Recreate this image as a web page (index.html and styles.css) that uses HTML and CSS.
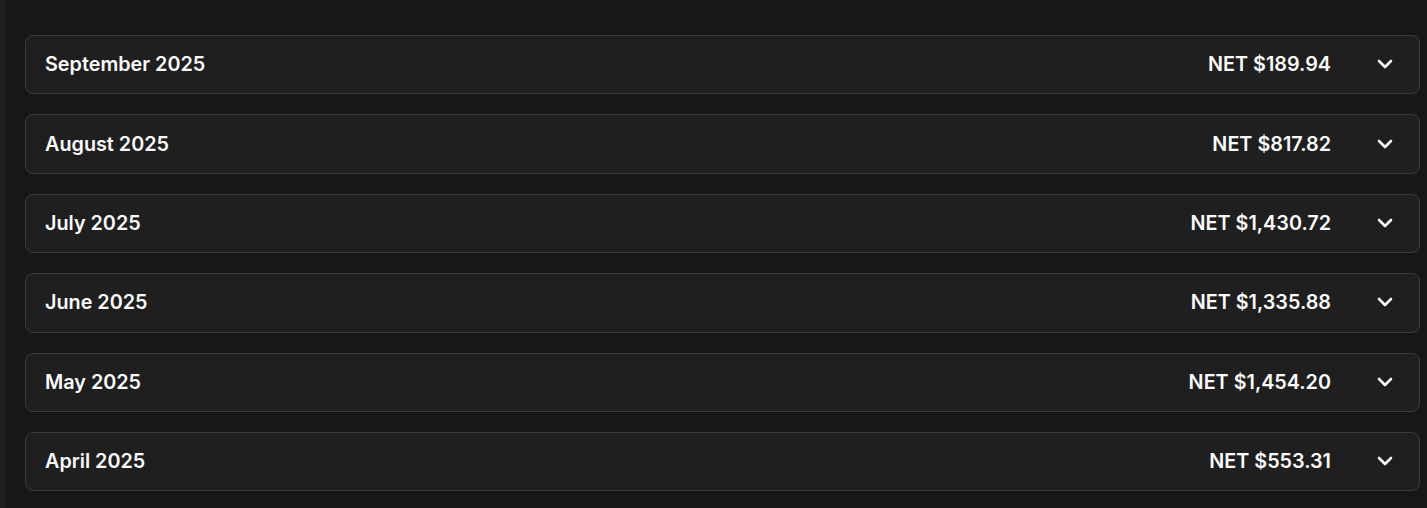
FILE: index.html
```html
<!DOCTYPE html>
<html>
<head>
<meta charset="utf-8">
<link rel="stylesheet" href="styles.css">
</head>
<body>
<div class="layout">
  <div class="rail"></div>
  <main class="main">
    <div class="list">
      <div class="month">
        <span class="title">September 2025</span>
        <div class="right"><span class="net">NET $189.94</span><svg class="chev" viewBox="0 0 24 24"><path d="m6 9 6 6 6-6"/></svg></div>
      </div>
      <div class="month">
        <span class="title">August 2025</span>
        <div class="right"><span class="net">NET $817.82</span><svg class="chev" viewBox="0 0 24 24"><path d="m6 9 6 6 6-6"/></svg></div>
      </div>
      <div class="month">
        <span class="title">July 2025</span>
        <div class="right"><span class="net">NET $1,430.72</span><svg class="chev" viewBox="0 0 24 24"><path d="m6 9 6 6 6-6"/></svg></div>
      </div>
      <div class="month">
        <span class="title">June 2025</span>
        <div class="right"><span class="net">NET $1,335.88</span><svg class="chev" viewBox="0 0 24 24"><path d="m6 9 6 6 6-6"/></svg></div>
      </div>
      <div class="month">
        <span class="title">May 2025</span>
        <div class="right"><span class="net">NET $1,454.20</span><svg class="chev" viewBox="0 0 24 24"><path d="m6 9 6 6 6-6"/></svg></div>
      </div>
      <div class="month">
        <span class="title">April 2025</span>
        <div class="right"><span class="net">NET $553.31</span><svg class="chev" viewBox="0 0 24 24"><path d="m6 9 6 6 6-6"/></svg></div>
      </div>
    </div>
  </main>
</div>
</body>
</html>
```
FILE: styles.css
```css
* { box-sizing: border-box; }
html, body { margin: 0; padding: 0; background: #171717; height: 100%; overflow: hidden; }
body { font-family: Inter, "Noto Sans", sans-serif; color: #fafafa; }
.layout { display: flex; height: 508px; }
.rail { width: 5px; flex: none; background: #1f1f1f; }
.main { flex: 1; padding: 35px 7px 0 20px; }
.list { display: flex; flex-direction: column; gap: 20px; }
.month {
  display: flex; align-items: center; justify-content: space-between;
  height: 59.4px; padding: 0 22px 1px 19px;
  background: #1f1f1f; border: 1px solid #3b3b3b; border-radius: 8px;
}
.title, .net { font-size: 19.8px; font-weight: 600; letter-spacing: 0; }
.right { display: flex; align-items: center; gap: 42px; }
.chev { width: 24px; height: 24px; fill: none; stroke: #fafafa; stroke-width: 2.6; stroke-linecap: round; stroke-linejoin: round; }
```
